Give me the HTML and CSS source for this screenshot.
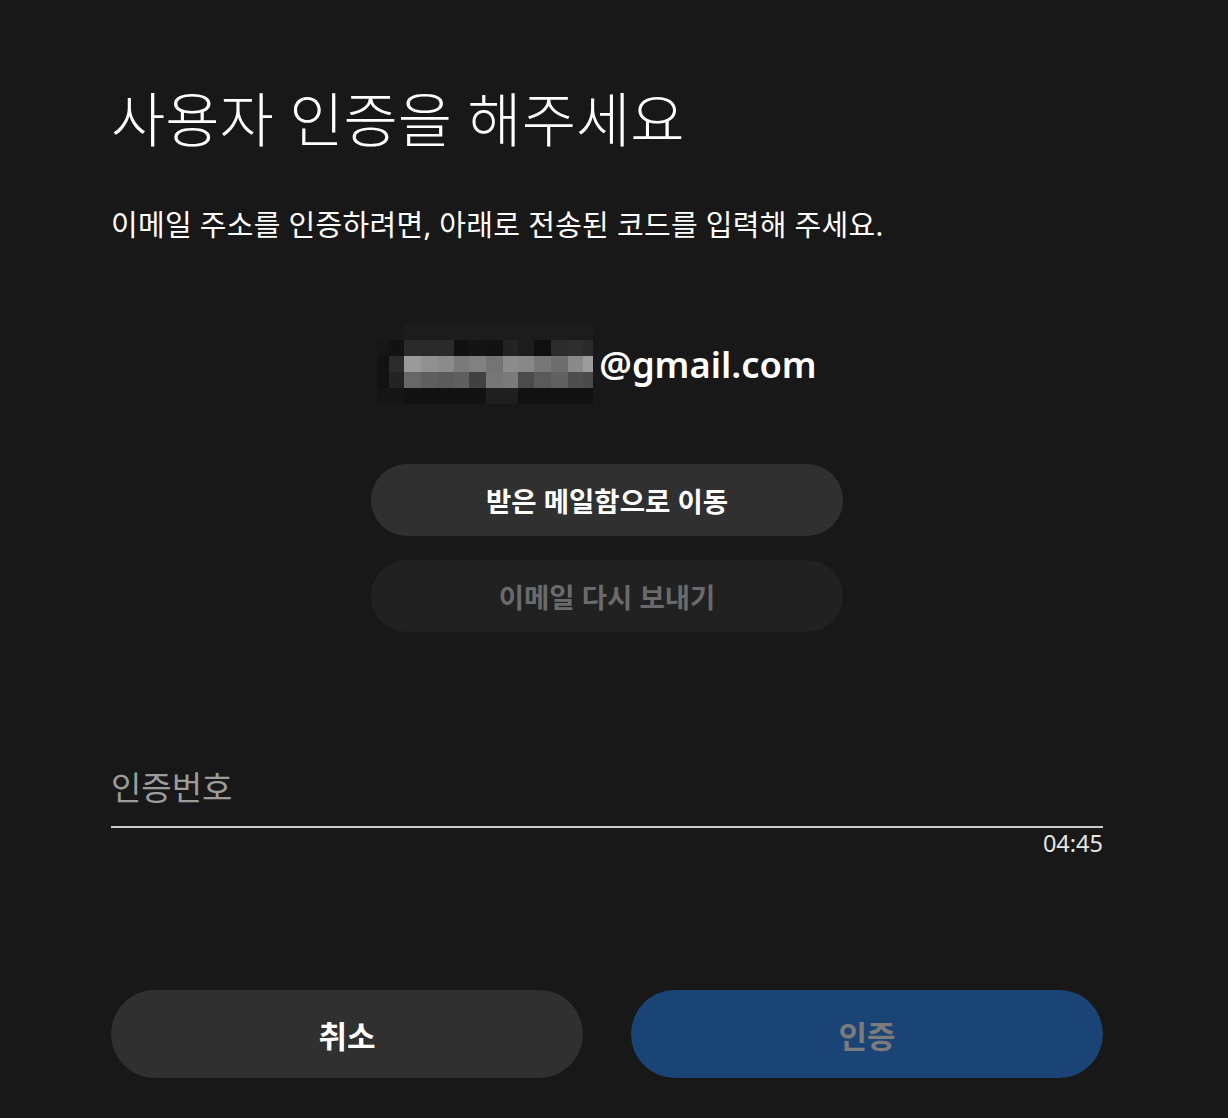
FILE: index.html
```html
<!DOCTYPE html>
<html lang="ko">

<head>
    <meta charset="UTF-8">
    <meta name="viewport" content="width=device-width, initial-scale=1.0">
    <title>사용자 인증</title>
    <link rel="stylesheet" href="styles.css">
</head>

<body>
    <main class="verify">
        <h1 class="verify-title">사용자 인증을 해주세요</h1>
        <p class="verify-desc">이메일 주소를 인증하려면, 아래로 전송된 코드를 입력해 주세요.</p>

        <div class="verify-email">
            <!-- masked local part of the address -->
            <svg class="email-mask" width="216" height="80" viewBox="0 0 216 80">
                <g>
                    <rect x="27" y="0" width="189" height="16" fill="#1c1c1c" />
                </g>
                <g>
                    <rect x="0" y="16" width="12" height="16" fill="#161616" />
                    <rect x="12" y="16" width="15" height="16" fill="#121212" />
                    <rect x="27" y="16" width="50" height="16" fill="#2a2a2a" />
                    <rect x="77" y="16" width="15" height="16" fill="#101010" />
                    <rect x="92" y="16" width="17" height="16" fill="#141414" />
                    <rect x="109" y="16" width="17" height="16" fill="#121212" />
                    <rect x="126" y="16" width="15" height="16" fill="#232323" />
                    <rect x="141" y="16" width="16" height="16" fill="#1c1c1c" />
                    <rect x="157" y="16" width="17" height="16" fill="#0f0f0f" />
                    <rect x="174" y="16" width="17" height="16" fill="#2b2b2b" />
                    <rect x="191" y="16" width="15" height="16" fill="#2e2e2e" />
                    <rect x="206" y="16" width="10" height="16" fill="#2a2a2a" />
                </g>
                <g>
                    <rect x="0" y="32" width="12" height="16" fill="#121212" />
                    <rect x="12" y="32" width="15" height="16" fill="#2b2b2b" />
                    <rect x="27" y="32" width="17" height="16" fill="#9a9a9a" />
                    <rect x="44" y="32" width="17" height="16" fill="#909090" />
                    <rect x="61" y="32" width="16" height="16" fill="#8b8b8b" />
                    <rect x="77" y="32" width="15" height="16" fill="#7a7a7a" />
                    <rect x="92" y="32" width="17" height="16" fill="#818181" />
                    <rect x="109" y="32" width="17" height="16" fill="#747474" />
                    <rect x="126" y="32" width="15" height="16" fill="#8c8c8c" />
                    <rect x="141" y="32" width="16" height="16" fill="#888888" />
                    <rect x="157" y="32" width="17" height="16" fill="#777777" />
                    <rect x="174" y="32" width="17" height="16" fill="#6e6e6e" />
                    <rect x="191" y="32" width="15" height="16" fill="#8a8a8a" />
                    <rect x="206" y="32" width="10" height="16" fill="#9c9c9c" />
                </g>
                <g>
                    <rect x="0" y="48" width="12" height="16" fill="#121212" />
                    <rect x="12" y="48" width="15" height="16" fill="#232323" />
                    <rect x="27" y="48" width="17" height="16" fill="#676767" />
                    <rect x="44" y="48" width="17" height="16" fill="#5f5f5f" />
                    <rect x="61" y="48" width="16" height="16" fill="#5b5b5b" />
                    <rect x="77" y="48" width="15" height="16" fill="#5f5f5f" />
                    <rect x="92" y="48" width="17" height="16" fill="#414141" />
                    <rect x="109" y="48" width="17" height="16" fill="#777777" />
                    <rect x="126" y="48" width="15" height="16" fill="#7b7b7b" />
                    <rect x="141" y="48" width="16" height="16" fill="#4b4b4b" />
                    <rect x="157" y="48" width="17" height="16" fill="#5a5a5a" />
                    <rect x="174" y="48" width="17" height="16" fill="#616161" />
                    <rect x="191" y="48" width="15" height="16" fill="#4d4d4d" />
                    <rect x="206" y="48" width="10" height="16" fill="#4a4a4a" />
                </g>
                <g>
                    <rect x="0" y="64" width="27" height="16" fill="#151515" />
                    <rect x="27" y="64" width="82" height="16" fill="#111111" />
                    <rect x="109" y="64" width="32" height="16" fill="#1f1f1f" />
                    <rect x="141" y="64" width="75" height="16" fill="#111111" />
                </g>
            </svg>
            <span class="email-domain">@gmail.com</span>
        </div>

        <div class="mail-actions">
            <button class="pill-btn pill-btn--primary">받은 메일함으로 이동</button>
            <button class="pill-btn pill-btn--muted" disabled>이메일 다시 보내기</button>
        </div>

        <div class="code-field">
            <input class="code-input" type="text" placeholder="인증번호">
            <div class="code-timer">04:45</div>
        </div>

        <div class="verify-footer">
            <button class="footer-btn footer-btn--cancel">취소</button>
            <button class="footer-btn footer-btn--submit" disabled>인증</button>
        </div>
    </main>
</body>

</html>
```

FILE: styles.css
```css
body {
    margin: 0;
    background: #181818;
    color: #fff;
    font-family: "Noto Sans", "Noto Sans CJK KR", sans-serif;
}

.verify {
    width: 992px;
    padding: 83px 0 0 111px;
}

.verify-title {
    margin: 0;
    font-size: 59px;
    line-height: 72px;
    font-weight: 300;
}

.verify-desc {
    margin: 50px 0 0;
    font-size: 29px;
    line-height: 40px;
    letter-spacing: 0.3px;
}

.verify-email {
    display: flex;
    justify-content: center;
    align-items: center;
    margin-top: 79px;
    padding-right: 20px;
    height: 80px;
}

.email-mask {
    display: block;
}

.email-domain {
    margin-left: 6px;
    font-size: 36.3px;
    font-weight: 600;
}

.mail-actions {
    display: flex;
    flex-direction: column;
    align-items: center;
    gap: 24px;
    margin-top: 60px;
}

.pill-btn {
    width: 472px;
    height: 72px;
    border: none;
    border-radius: 36px;
    font-family: inherit;
    font-size: 27.5px;
    font-weight: 700;
    cursor: pointer;
}

.pill-btn--primary {
    background: #303030;
    color: #fff;
}

.pill-btn--muted {
    background: #212121;
    color: #6a6a6a;
    cursor: default;
}

.code-field {
    margin-top: 124px;
}

.code-input {
    display: block;
    box-sizing: content-box;
    width: 100%;
    height: 62px;
    padding: 0 0 8px;
    border: none;
    border-bottom: 2px solid #cccccc;
    background: transparent;
    color: #fff;
    font-family: inherit;
    font-size: 33px;
    outline: none;
}

.code-input::placeholder {
    color: #9c9c9c;
}

.code-timer {
    margin-top: 2px;
    text-align: right;
    font-size: 23.5px;
    line-height: 26px;
    color: #e4e4e4;
}

.verify-footer {
    display: flex;
    gap: 48px;
    margin-top: 134px;
}

.footer-btn {
    flex: 1;
    height: 88px;
    border: none;
    border-radius: 44px;
    font-family: inherit;
    font-size: 31px;
    font-weight: 700;
    cursor: pointer;
}

.footer-btn--cancel {
    background: #303030;
    color: #fff;
}

.footer-btn--submit {
    background: #1a4476;
    color: #7b7b7b;
    cursor: default;
}
```
